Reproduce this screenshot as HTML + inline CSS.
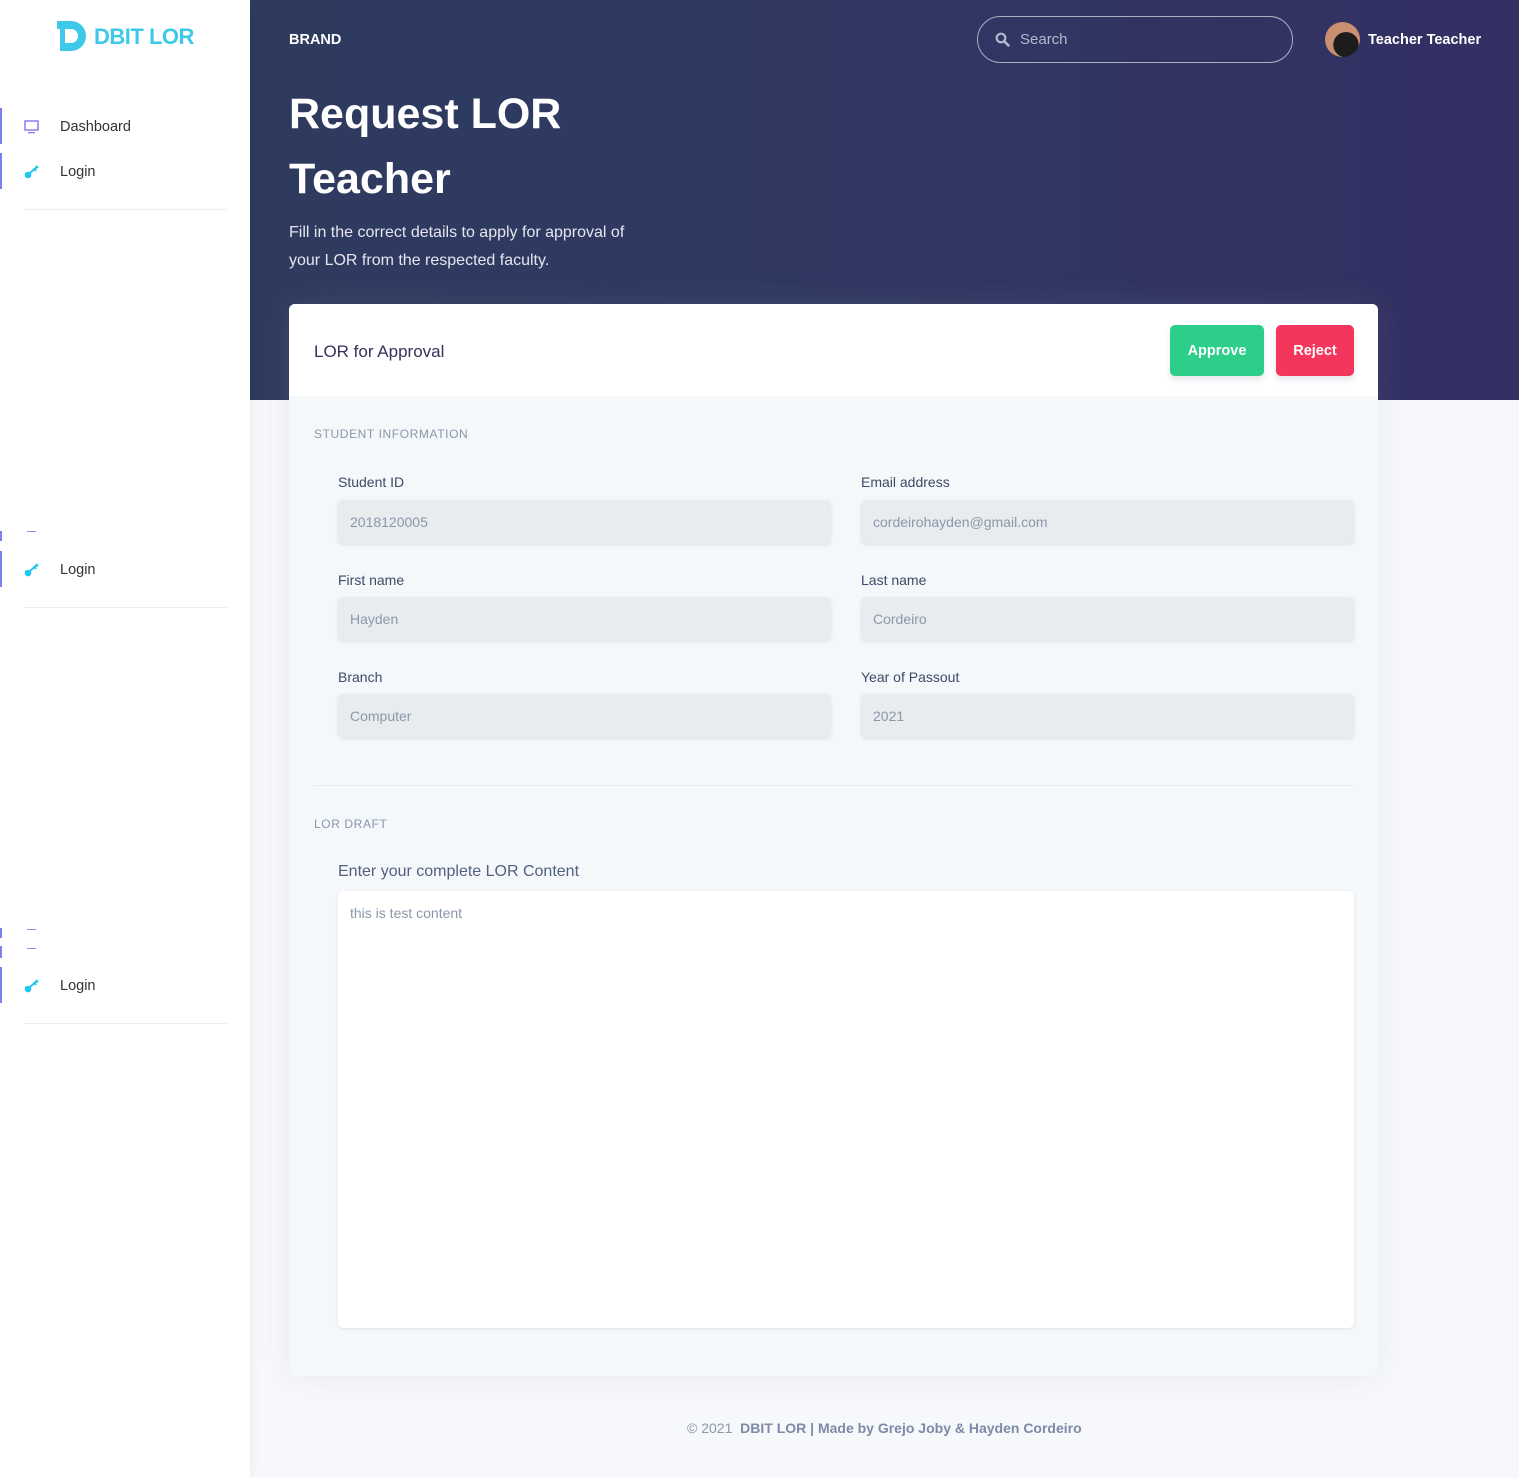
<!DOCTYPE html>
<html><head><meta charset="utf-8"><style>
*{box-sizing:border-box;margin:0;padding:0}
body{width:1519px;height:1478px;overflow:hidden;background:#f7f8fc;font-family:"Liberation Sans",sans-serif;position:relative}
.a{position:absolute}
#side{left:0;top:0;width:250px;height:1478px;background:#fff;box-shadow:2px 0 12px rgba(0,0,0,.04);z-index:2}
.nav{position:absolute;left:0;height:36px;width:250px}
.nav .bar{position:absolute;left:0;top:0;width:2px;height:36px;background:#7b7ff0}
.nav span{position:absolute;left:60px;top:11px;font-size:14.5px;color:#333}
.hr{position:absolute;left:24px;width:203px;height:1px;background:#eceef2}
.dash{position:absolute;left:27px;width:9px;height:1px;background:#8a8ff0}
.sb{position:absolute;left:0;width:2px;background:#7b7ff0}
#hdr{left:250px;top:0;width:1269px;height:400px;background:linear-gradient(90deg,#2e3b5e 0%,#303863 50%,#332f63 100%)}
.lbl{position:absolute;font-size:14px;color:#3e4a66;font-weight:500}
.inp{position:absolute;height:44px;width:493px;background:#e9ecef;border-radius:5px;box-shadow:0 1px 3px rgba(50,50,93,.12);font-size:14px;color:#8a98ab;padding:14px 12px}
</style></head><body>
<div id="side" class="a">
  <svg class="a" style="left:57px;top:21px" width="32" height="30" viewBox="0 0 32 30"><path d="M0 0H14A15 15 0 0 1 14 30H3V22H14A7 7 0 0 0 14 8H0Z" fill="#3ec9e8"/><rect x="3" y="8" width="5" height="14" fill="#3ec9e8"/></svg>
  <div class="a" style="left:94px;top:24px;font-size:22px;font-weight:bold;color:#3ec9e8;letter-spacing:-0.5px">DBIT LOR</div>
  <div class="nav" style="top:108px"><div class="bar"></div>
    <svg class="a" style="left:24px;top:12px" width="15" height="14" viewBox="0 0 15 14"><rect x="1" y="1" width="13" height="9" fill="none" stroke="#8c7cf0" stroke-width="1.5"/><rect x="4" y="12" width="7" height="1.3" fill="#8c7cf0"/></svg>
    <span>Dashboard</span></div>
  <div class="nav" style="top:153px"><div class="bar"></div>
    <svg class="a" style="left:24px;top:12px" width="16" height="14" viewBox="0 0 16 14"><circle cx="4" cy="10" r="3.3" fill="#1ec7ef"/><path d="M6 8L13 2M10 3l2 3M12 1l2 2" stroke="#1ec7ef" stroke-width="2"/></svg>
    <span>Login</span></div>
  <div class="hr" style="top:209px"></div>
  <div class="sb" style="top:531px;height:10px"></div><div class="dash" style="top:531px"></div>
  <div class="nav" style="top:551px"><div class="bar"></div>
    <svg class="a" style="left:24px;top:12px" width="16" height="14" viewBox="0 0 16 14"><circle cx="4" cy="10" r="3.3" fill="#1ec7ef"/><path d="M6 8L13 2M10 3l2 3M12 1l2 2" stroke="#1ec7ef" stroke-width="2"/></svg>
    <span>Login</span></div>
  <div class="hr" style="top:607px"></div>
  <div class="sb" style="top:928px;height:10px"></div><div class="dash" style="top:929px"></div>
  <div class="sb" style="top:946px;height:12px"></div><div class="dash" style="top:948px"></div>
  <div class="nav" style="top:967px"><div class="bar"></div>
    <svg class="a" style="left:24px;top:12px" width="16" height="14" viewBox="0 0 16 14"><circle cx="4" cy="10" r="3.3" fill="#1ec7ef"/><path d="M6 8L13 2M10 3l2 3M12 1l2 2" stroke="#1ec7ef" stroke-width="2"/></svg>
    <span>Login</span></div>
  <div class="hr" style="top:1023px"></div>
</div>
<div id="hdr" class="a"></div>
<div class="a" style="left:289px;top:32px;color:#fff;font-size:14.5px;font-weight:bold">BRAND</div>
<div class="a" style="left:977px;top:16px;width:316px;height:47px;border:1.5px solid rgba(255,255,255,.6);border-radius:24px"></div>
<svg class="a" style="left:995px;top:32px" width="15" height="15" viewBox="0 0 15 15"><circle cx="6" cy="6" r="4.3" fill="none" stroke="#b4b8cc" stroke-width="2.2"/><path d="M9.5 9.5l4 4" stroke="#b4b8cc" stroke-width="2.5" stroke-linecap="round"/></svg>
<div class="a" style="left:1020px;top:31px;color:#b4b8cc;font-size:15px">Search</div>
<div class="a" style="left:1325px;top:22px;width:35px;height:35px;border-radius:50%;background:radial-gradient(circle at 60% 65%,#1c1c1c 40%,#c89070 42%)"></div>
<div class="a" style="left:1368px;top:32px;color:#fff;font-size:14.5px;font-weight:bold">Teacher Teacher</div>
<div class="a" style="left:289px;top:82px;color:#fff;font-size:43px;font-weight:bold;line-height:65px">Request LOR<br>Teacher</div>
<div class="a" style="left:289px;top:219px;color:#e4e6ee;font-size:16px;line-height:27.5px">Fill in the correct details to apply for approval of<br>your LOR from the respected faculty.</div>
<div class="a" style="left:289px;top:304px;width:1089px;height:1072px;background:#f5f8fb;border-radius:6px;box-shadow:0 0 30px rgba(140,152,164,.15);overflow:hidden">
  <div class="a" style="left:0;top:0;width:1089px;height:92px;background:#fff"></div>
  <div class="a" style="left:25px;top:38px;font-size:17px;color:#32325d">LOR for Approval</div>
  <div class="a" style="left:881px;top:21px;width:94px;height:51px;background:#2dce89;border-radius:5px;color:#fff;font-weight:bold;font-size:14.5px;text-align:center;line-height:53px;box-shadow:0 4px 6px rgba(50,50,93,.11)">Approve</div>
  <div class="a" style="left:987px;top:21px;width:78px;height:51px;background:#f5365c;border-radius:5px;color:#fff;font-weight:bold;font-size:14.5px;text-align:center;line-height:53px;box-shadow:0 4px 6px rgba(50,50,93,.11)">Reject</div>
  <div class="a" style="left:25px;top:123px;font-size:12px;color:#8898aa;letter-spacing:.6px">STUDENT INFORMATION</div>
  <div class="lbl" style="left:49px;top:170px">Student ID</div><div class="inp" style="left:49px;top:196px">2018120005</div>
  <div class="lbl" style="left:572px;top:170px">Email address</div><div class="inp" style="left:572px;top:196px">cordeirohayden@gmail.com</div>
  <div class="lbl" style="left:49px;top:268px">First name</div><div class="inp" style="left:49px;top:293px">Hayden</div>
  <div class="lbl" style="left:572px;top:268px">Last name</div><div class="inp" style="left:572px;top:293px">Cordeiro</div>
  <div class="lbl" style="left:49px;top:365px">Branch</div><div class="inp" style="left:49px;top:390px">Computer</div>
  <div class="lbl" style="left:572px;top:365px">Year of Passout</div><div class="inp" style="left:572px;top:390px">2021</div>
  <div class="a" style="left:25px;top:481px;width:1040px;height:1px;background:#e6eaef"></div>
  <div class="a" style="left:25px;top:513px;font-size:12px;color:#8898aa;letter-spacing:.6px">LOR DRAFT</div>
  <div class="a" style="left:49px;top:559px;font-size:16px;color:#525f7f">Enter your complete LOR Content</div>
  <div class="a" style="left:49px;top:587px;width:1016px;height:437px;background:#fff;border-radius:5px;box-shadow:0 1px 3px rgba(50,50,93,.12);font-size:14px;color:#8a98ab;padding:14px 12px">this is test content</div>
</div>
<div class="a" style="left:687px;top:1420px;font-size:14px;color:#8898aa">© 2021 &nbsp;<b style="font-weight:600;color:#7d8aa6">DBIT LOR | Made by Grejo Joby &amp; Hayden Cordeiro</b></div>
</body></html>
